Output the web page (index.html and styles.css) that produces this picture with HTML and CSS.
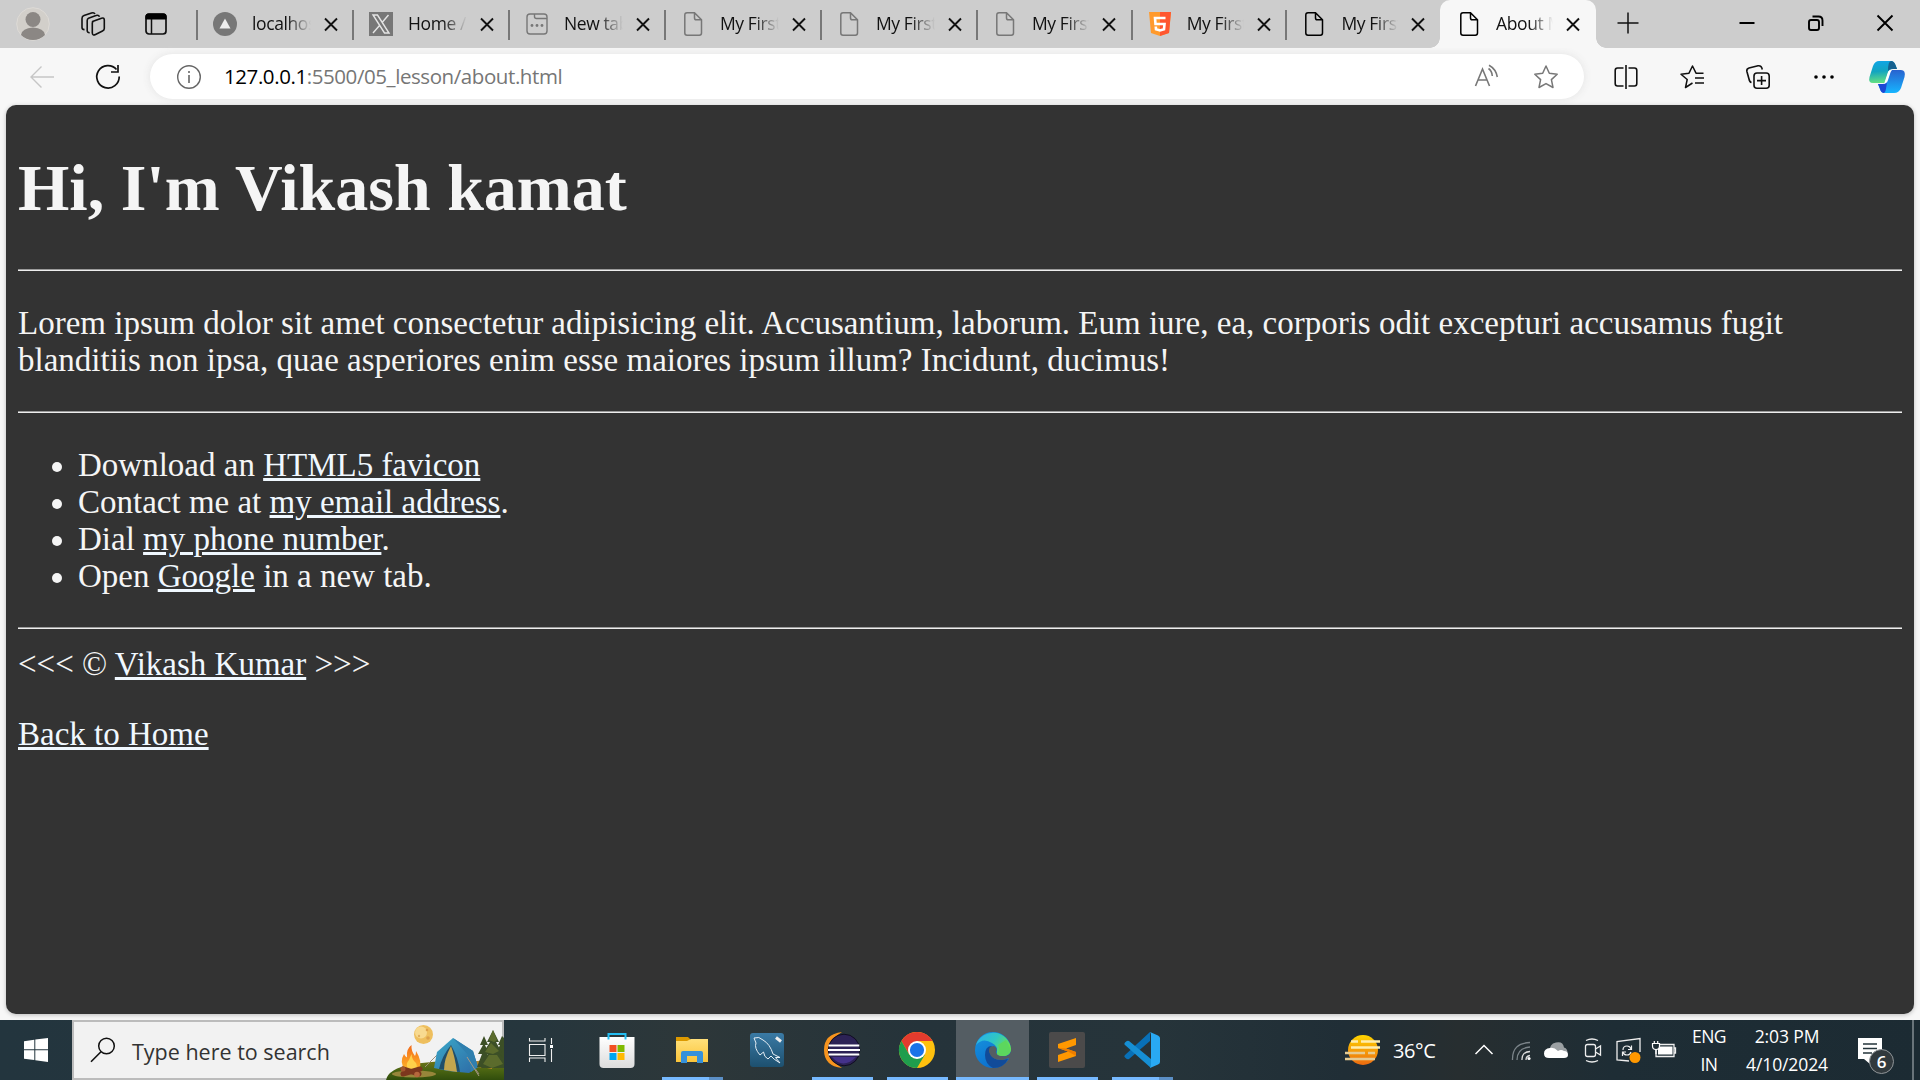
FILE: index.html
```
<!DOCTYPE html>
<html lang="en">
<head>
<meta charset="utf-8">
<title>About Me</title>
<link rel="stylesheet" href="styles.css">
</head>
<body>
<svg class="defs" aria-hidden="true">
  <defs>
    <symbol id="x" viewBox="0 0 24 24"><path d="M6 6.500 18 18.500M18 6.500 6 18.500" fill="none" stroke="#111" stroke-width="1.900"/></symbol>
    <symbol id="doc" viewBox="0 0 24 24"><path d="M6 .8H13.500L20.500 7.800V21Q20.500 23.200 18.300 23.200H6Q3.800 23.200 3.800 21V3Q3.800 .8 6 .8ZM13.500 1V6Q13.500 7.800 15.300 7.800H20.300" fill="none" stroke="currentColor" stroke-width="1.500"/></symbol>
    <linearGradient id="tent" x2="1" y2="1"><stop stop-color="#3ba9c9"/><stop offset="1" stop-color="#2d6aa5"/></linearGradient>
    <linearGradient id="flame" x2="0" y2="1"><stop stop-color="#f26a1b"/><stop offset="1" stop-color="#ffb52a"/></linearGradient>
    <linearGradient id="grass" x2="0" y2="1"><stop stop-color="#6f7418"/><stop offset=".5" stop-color="#4a6412"/><stop offset="1" stop-color="#304d0c"/></linearGradient>
    <linearGradient id="gold" x2="0" y2="1"><stop stop-color="#ffd500"/><stop offset="1" stop-color="#ec6a10"/></linearGradient>
    <linearGradient id="edgeTop" x2="1" y2=".5"><stop stop-color="#2bafee"/><stop offset=".55" stop-color="#2fc6c4"/><stop offset="1" stop-color="#6ce34b"/></linearGradient>
    <linearGradient id="edgeLow" x2=".6" y2="1"><stop stop-color="#1795df"/><stop offset="1" stop-color="#0b6dcc"/></linearGradient>
    <linearGradient id="cpA" x2=".1" y2="1"><stop stop-color="#10a5e8"/><stop offset=".5" stop-color="#13a5c0"/><stop offset="1" stop-color="#63df83"/></linearGradient>
    <linearGradient id="cpB" x2="0" y2="1"><stop stop-color="#2862cf"/><stop offset="1" stop-color="#16b5ff"/></linearGradient>
    <linearGradient id="fold" x2="0" y2="1"><stop stop-color="#ffe07a"/><stop offset="1" stop-color="#fbc43a"/></linearGradient>
    <linearGradient id="sea" x2="0" y2="1"><stop stop-color="#3a7aa5"/><stop offset="1" stop-color="#1d506f"/></linearGradient>
    <linearGradient id="bag" x2="0" y2="1"><stop stop-color="#fff"/><stop offset="1" stop-color="#dcdcdc"/></linearGradient>
  </defs>
</svg>

<header class="tabstrip">
  <div class="lead">
    <svg class="avatar" viewBox="0 0 34 34"><circle cx="17" cy="17" r="16.300" fill="#d2cfca" stroke="#dedbd7"/><circle cx="17" cy="12.500" r="7.500" fill="#8b8784"/><path d="M5 28Q6 21 17 20.500Q28 21 29 28Q24 33 17 33T5 28Z" fill="#8b8784"/></svg>
    <svg class="ic" viewBox="0 0 24 24"><g fill="none" stroke="#111" stroke-width="1.600" stroke-linejoin="round"><path d="M11.500 9.500 20.500 6.200Q23.300 5.400 23.300 8V16.500Q23.300 18.200 21.500 19L14.500 22.500Q11.500 24 11.300 21V11Q11.300 10 12.200 9.500Z"/><path d="M18.500 4.800Q17.600 2.600 15 3.600L7.500 6.200Q6.200 6.800 6.200 8.500V18.500Q6.200 20.800 8.700 20.700"/><path d="M14 2Q13 .1 10.500 1L3 3.600Q1 4.300 1 6.500V15.500Q1 17.600 3.500 17.600"/></g></svg>
    <svg class="ic" viewBox="0 0 24 24"><rect x="2" y="2" width="20" height="20" rx="3" fill="none" stroke="#111" stroke-width="1.700"/><path d="M2 7V4Q2 2 4 2H20Q22 2 22 4V7Z" fill="#000" stroke="#000"/><path d="M7.500 7V22" stroke="#111" stroke-width="1.500"/></svg>
  </div>
  <div class="tab"><svg viewBox="0 0 24 24"><circle cx="12" cy="12" r="12" fill="#777"/><path d="M12 6.500 17.500 16.500H6.500Z" fill="#eee"/></svg><span class="name">localhost</span><svg><use href="#x"/></svg></div>
  <div class="tab"><svg viewBox="0 0 24 24"><path d="M0 0H24V24H0Z" fill="#777"/><path d="M4 3H8.500L20 21H15.500ZM19.500 3 13.500 10M10.500 13.500 4 21" fill="none" stroke="#e5e5e5" stroke-width="1.400"/></svg><span class="name">Home / X</span><svg><use href="#x"/></svg></div>
  <div class="tab"><svg viewBox="0 0 24 24"><g fill="none" stroke="#777" stroke-width="1.400"><rect x="2" y="2" width="20" height="20" rx="3"/><path d="M9.500 2V4.500Q9.500 6.500 11.500 6.500H22"/></g><g fill="#777"><circle cx="7" cy="13.500" r="1.400"/><circle cx="12" cy="13.500" r="1.400"/><circle cx="17" cy="13.500" r="1.400"/></g></svg><span class="name">New tab</span><svg><use href="#x"/></svg></div>
  <div class="tab idle"><svg><use href="#doc"/></svg><span class="name">My First</span><svg><use href="#x"/></svg></div>
  <div class="tab idle"><svg><use href="#doc"/></svg><span class="name">My First</span><svg><use href="#x"/></svg></div>
  <div class="tab idle narrow"><svg><use href="#doc"/></svg><span class="name">My First</span><svg><use href="#x"/></svg></div>
  <div class="tab narrow"><svg viewBox="0 0 24 24"><path d="M1 0H23L21 21 12 24 3 21Z" fill="#ff9a2c"/><path d="M12 0H23L21 21 12 24Z" fill="#ff5630"/><path d="M17.500 6H7L7.500 12H16.500L16 17.200 12 18.500 8 17.200 7.800 14.500" fill="none" stroke="#fff" stroke-width="2.600"/></svg><span class="name">My First</span><svg><use href="#x"/></svg></div>
  <div class="tab narrow"><svg><use href="#doc"/></svg><span class="name">My First</span><svg><use href="#x"/></svg></div>
  <div class="tab narrow active"><svg><use href="#doc"/></svg><span class="name">About Me</span><svg><use href="#x"/></svg></div>
  <svg class="plus" viewBox="0 0 24 24"><path d="M1.500 12H22.500M12 1.500V22.500" stroke="#111" stroke-width="1.500"/></svg>
  <div class="winctl">
    <svg viewBox="0 0 24 24"><path d="M4.500 12H19.500" stroke="#000" stroke-width="2"/></svg>
    <svg viewBox="0 0 24 24"><g fill="none" stroke="#000" stroke-width="1.900"><rect x="5" y="9" width="10" height="10" rx="2"/><path d="M8.500 5.500H14.500Q18.500 5.500 18.500 9.500V15"/></g></svg>
    <svg viewBox="0 0 24 24"><path d="M4.500 4.500 19.500 19.500M19.500 4.500 4.500 19.500" stroke="#000" stroke-width="1.900"/></svg>
  </div>
</header>

<nav class="toolbar">
  <svg class="back" viewBox="0 0 24 24"><path d="M24 12H1M11.500 1.500 1 12 11.500 22.500" fill="none" stroke="#c6c6c6" stroke-width="1.400"/></svg>
  <svg class="reload" viewBox="0 0 24 24"><path d="M20.500 4.500A11.200 11.200 0 1 0 23.200 11.500M22 0V7H15" fill="none" stroke="#111" stroke-width="1.700"/></svg>
  <div class="address">
    <svg viewBox="0 0 24 24"><circle cx="12" cy="12" r="11.300" fill="none" stroke="#666" stroke-width="1.400"/><path d="M12 10V18M12 6V8" stroke="#666" stroke-width="1.600"/></svg>
    <span class="url"><b>127.0.0.1</b>:5500/05_lesson/about.html</span>
    <svg viewBox="0 0 24 24"><path d="M1.500 21 8.500 4 15.500 21M4 15H13M14.500 3.500Q18 6 18.300 11M15 .2Q22 4 23.300 12" fill="none" stroke="#777" stroke-width="1.600"/></svg>
    <svg viewBox="0 0 24 24"><path d="M12 1 15.300 8.300 23.200 9.200 17.400 14.600 19 22.500 12 18.600 5 22.500 6.600 14.600 .8 9.200 8.700 8.300Z" fill="none" stroke="#777" stroke-width="1.500" stroke-linejoin="round"/></svg>
  </div>
  <div class="tools">
    <svg viewBox="0 0 24 24"><path d="M9.500 3H3.500Q1.200 3 1.200 5.500V18.500Q1.200 21 3.500 21H9.500M14.500 3H20.500Q22.800 3 22.800 5.500V18.500Q22.800 21 20.500 21H14.500M12 0V24" fill="none" stroke="#111" stroke-width="1.600"/></svg>
    <svg viewBox="0 0 24 24"><path d="M12.500 18 5.500 22.500 7.200 14.500 1 9.200 9 8.200 12.500 1 16 8.200H23.500M15 13H24M15 18H24" fill="none" stroke="#111" stroke-width="1.500" stroke-linejoin="round"/></svg>
    <svg viewBox="0 0 24 24"><g fill="none" stroke="#111" stroke-width="1.600"><rect x="8" y="8" width="15.200" height="15.200" rx="3"/><path d="M15.600 11V20M11 15.600H20M5.500 17.500Q3.500 17 3 14L.9 6.500Q.3 3.800 3 3L12 .8Q15.500 .3 16.300 4.500"/></g></svg>
    <svg viewBox="0 0 24 24"><circle cx="4" cy="12" r="1.800"/><circle cx="12" cy="12" r="1.800"/><circle cx="20" cy="12" r="1.800"/></svg>
    <svg class="copilot" viewBox="0 0 36 34"><path d="M10 1H22Q25 1 26.500 5L28 9H24Q20 9 19 13L16 23H4Q-1 23 .5 17L4 6Q6 1 10 1Z" fill="url(#cpA)"/><path d="M22 1Q25 1 26.500 5L28 9H24Q20 9 19 11Q19 1 22 1Z" fill="#16618f"/><path d="M9 24H14Q17 24 18 20L21 10H32Q37 10 35.500 17L32 28Q30 33 25 33H16Q12 33 11 29Z" fill="url(#cpB)"/><path d="M9 24H14Q17 24 18 21Q17 33 15 33Q12 33 11 29Z" fill="#1c49d5"/><path d="M19 12Q20 9.500 24 9.500Q22 10 21 14L19 20Q18 24 13.500 24Q15.500 24 16 21Z" fill="#fff"/></svg>
  </div>
</nav>

<main class="page">
  <h1>Hi, I'm Vikash kamat</h1>
  <hr>
  <p>Lorem ipsum dolor sit amet consectetur adipisicing elit. Accusantium, laborum. Eum iure, ea, corporis odit excepturi accusamus fugit blanditiis non ipsa, quae asperiores enim esse maiores ipsum illum? Incidunt, ducimus!</p>
  <hr>
  <ul>
    <li>Download an <a href="#">HTML5 favicon</a></li>
    <li>Contact me at <a href="#">my email address</a>.</li>
    <li>Dial <a href="#">my phone number</a>.</li>
    <li>Open <a href="#">Google</a> in a new tab.</li>
  </ul>
  <hr>
  <footer>&lt;&lt;&lt; &copy; <a href="#">Vikash Kumar</a> &gt;&gt;&gt;</footer>
  <p class="home"><a href="#">Back to Home</a></p>
</main>

<div class="taskbar">
  <div class="start"><svg viewBox="0 0 24 24"><path d="M0 3.200 10.300 1.800V11.300H0ZM11.300 1.600 24 0V11.300H11.300ZM0 12.300H10.300V22L0 20.700ZM11.300 12.300H24V24L11.300 22.200Z" fill="#fff"/></svg></div>
  <div class="search">
    <svg class="lens" viewBox="0 0 26 26"><circle cx="16.500" cy="9" r="7.800" fill="none" stroke="#111" stroke-width="1.500"/><path d="M11 14.700 1 24.800" stroke="#111" stroke-width="1.600"/></svg>
    <span class="hint">Type here to search</span>
    <svg class="scene" viewBox="0 0 118 60">
      <path d="M0 60Q2 49 26 44Q70 38 118 44V60Z" fill="url(#grass)"/>
      <path d="M84 43Q96 38 106 43V49Q96 46 84 48Z" fill="#b3842a"/>
      <ellipse cx="28" cy="54" rx="22" ry="3.500" fill="#97863a"/>
      <circle cx="37.500" cy="14.500" r="9.500" fill="#eebf5e"/><circle cx="35" cy="12.500" r="6" fill="#f8da90"/><circle cx="42" cy="18" r="1.800" fill="#dda04b"/><circle cx="41" cy="10" r="1.300" fill="#dda04b"/><circle cx="33" cy="16" r="1.200" fill="#e3b060"/>
      <path d="M19 50Q13 42 18 34Q20 38 21 37Q20 29 25.500 25Q25 31 29 36Q30 35 30 31Q37 42 33 50Z" fill="url(#flame)"/>
      <path d="M22 49Q19 44 23 40L25.500 34Q26 40 30 43Q32 47 29 50Z" fill="#ffd04a"/>
      <path d="M17 49 33 54M34 49 17 54" stroke="#7c371d" stroke-width="5" stroke-linecap="round"/><circle cx="17" cy="49" r="2.500" fill="#a3572f"/><circle cx="31" cy="54.500" r="2.800" fill="#b5683c"/>
      <path d="M39 47 52 34M81 37 93 54" stroke="#9c8e79"/>
      <path d="M48 48 51 32 67 18 87 31 92 47 83 53 62 51Z" fill="url(#tent)"/>
      <path d="M67 18 82 35 85 52 92 47 87 31Z" fill="#2f7fae"/>
      <path d="M65 25Q56 36 53 49L74 52Q72 37 65 25Z" fill="#214e6a"/>
      <path d="M65 26Q58 39 58 50L71 52Q69 37 65 26Z" fill="#c5a64e"/>
      <path d="M81 37 93 56" stroke="#a89a84"/>
      <g fill="#3c4f26"><path d="M98 16 94 25H97L92 34H96L91 47H106L101 34H103L99 25H102Z"/><path d="M116 16 112 25H114L110 34V47H118V18Z"/><path d="M107 10 101 22H104L97 33H102L95 48H118V38L112 33H116L110 22H113Z"/></g>
      <path d="M107 10 103 20 108 22 111 20ZM105 23 99 32 107 34 113 31ZM103 35 97 44 106 48 117 44 111 35Z" fill="#66742f" opacity=".75"/>
    </svg>
  </div>
  <div class="apps">
    <div class="app view"><svg viewBox="0 0 24 24"><path d="M.5 0V3H16V0M.5 24V20H16V24M.5 6.500H16V17.500H.5ZM22.500 0V24" fill="none" stroke="#eee" stroke-width="1.100"/><path d="M20.500 6.500H24.500V10.500H20.500Z" fill="#fff" stroke="#26363d"/></svg></div>
    <div class="app"><svg viewBox="0 0 36 36"><path d="M.5 5H35.500V32Q35.500 36 31.500 36H4.500Q.5 36 .5 32Z" fill="url(#bag)"/><path d="M9.500 7.500V2H26.500V7.500" fill="none" stroke="#23bdf2" stroke-width="2"/><path d="M10.500 13H17.500V20H10.500Z" fill="#f25022"/><path d="M18.500 13H25.500V20H18.500Z" fill="#7fba00"/><path d="M10.500 21H17.500V28H10.500Z" fill="#00a4ef"/><path d="M18.500 21H25.500V28H18.500Z" fill="#ffb900"/></svg></div>
    <div class="app run multi"><svg viewBox="0 0 36 36"><path d="M2 5H14L18 9H2Z" fill="#dc9900"/><path d="M2 9H13L17 7H34V30H2Z" fill="url(#fold)"/><path d="M7 31V21Q7 19 9 19H27Q29 19 29 21V31H23V24H13V31Z" fill="#3691db"/></svg></div>
    <div class="app"><svg viewBox="0 0 36 36"><rect x="1" y="1" width="34" height="34" rx="3" fill="url(#sea)"/><path d="M11 23Q5 16 7 11L5 6Q10 4 14 8Q21 12 24 22L31 25.500 26.500 25.500 31 31Q24 27 22 24L19 27Q15 25 14.500 20Z" fill="none" stroke="#e5eef5" stroke-width="1"/><path d="M27 5.500 32 9.500" stroke="#eee" stroke-width="3"/></svg></div>
    <div class="app run"><svg viewBox="0 0 36 36"><path d="M18 0Q0 2 0 18T18 36Q6 29 6 18T18 0Z" fill="#f7941e"/><circle cx="20" cy="18" r="15.800" fill="#2c2255" stroke="#100d20"/><path d="M8 25Q19 38 32 25Z" fill="#44328a"/><path d="M4.500 13.500H35.300M4 18H36M4.500 22.500H35.300" stroke="#fff" stroke-width="2"/></svg></div>
    <div class="app run"><svg viewBox="0 0 36 36"><circle cx="18" cy="18" r="18" fill="#ffc10e"/><path d="M2.400 9A18 18 0 0 1 33.600 9H18L10 22Z" fill="#e33b2e"/><path d="M2.400 9A18 18 0 0 0 18 36L26 22.500 18 26 10.200 22.500Z" fill="#1f9d4d"/><circle cx="18" cy="18" r="9" fill="#fff"/><circle cx="18" cy="18" r="7.100" fill="#1a73e8"/></svg></div>
    <div class="app run current"><svg viewBox="0 0 36 36"><circle cx="18" cy="18" r="18" fill="url(#edgeLow)"/><path d="M1 13A18 18 0 0 1 36 17Q36 24 28 24Q20 24 22 20Q23 14 17 11Q8 5 1 13Z" fill="url(#edgeTop)"/><path d="M10 23Q10 14 17 14Q13 18 16 23Q20 30 33 27Q29 36 18 36Q10 32 10 23Z" fill="#114b99"/><path d="M36 19Q35 25 27 24Q22 24 21 20Q23 16 19 14Q13 14 14 20Q17 29 28 28L34 26L36 29Z" fill="#545d63"/><path d="M23 13Q26 18 22 21Q22 24 28 24Q34 24 36 18L31 8Z" fill="#5cd75e"/></svg></div>
    <div class="app run"><svg viewBox="0 0 36 36"><rect width="36" height="36" rx="2" fill="#4b4a4a"/><path d="M9 12 27 6V13L17 16.500 27 20V24L9 30V23L19 19.500 9 16Z" fill="#ff9800"/><path d="M9 16 19 19.500 27 24V20L17 16.500Z" fill="#ed7d00"/></svg></div>
    <div class="app run multi"><svg viewBox="0 0 36 36"><path d="M26 0V9L5 27Q3 28 1 25.500Q-.5 24 1 23Z" fill="#0870b7"/><path d="M5 9 27 27V36L1 13Q-.5 12 1 10.500Q3 8 5 9Z" fill="#168fd4"/><path d="M26 0 34 3.500Q36 4.500 36 6V30Q36 31.500 34 32.500L26 36Q27 35 27 33V3Q27 1 26 0Z" fill="#29a9f3"/></svg></div>
  </div>
  <div class="weather"><svg viewBox="0 0 36 30"><ellipse cx="18" cy="15" rx="15" ry="15" fill="url(#gold)"/><path d="M6 6.500H13M16 6.500H35M6 12.500H35" stroke="#ffedae" stroke-width="2.300"/><path d="M0 18H20M23 18H30M0 24H30" stroke="#e5cb93" stroke-width="2.300"/></svg><span>36°C</span></div>
  <div class="tray">
    <svg viewBox="0 0 24 24"><path d="M3.500 16 12 7.500 20.500 16" fill="none" stroke="#fff" stroke-width="1.500"/></svg>
    <svg viewBox="0 0 24 24"><g fill="none" stroke-width="1.300"><path d="M4.500 22Q4 5 22 4.500M9 22Q9 10 22 9" stroke="#7c858a"/><path d="M14 22Q13.500 14 22 13.500M18 22Q18 18 22 17.500" stroke="#ddd"/></g><circle cx="21" cy="20.500" r="1.600" fill="#fff"/></svg>
    <svg viewBox="0 0 24 24"><path d="M6 13Q5 6 12 4.500T20 9.500Q24 10.500 23.500 16L8 18Z" fill="#9ba0a3"/><path d="M5 20Q0 20 0 15.500Q0 10.500 6 10Q10 9 14 13Q17 11 20 13Q24 13 24 17Q24 20 20 20Z" fill="#fff"/></svg>
    <svg viewBox="0 0 24 24"><g fill="none" stroke="#eee" stroke-width="1.300"><rect x="5.500" y="6.500" width="10" height="12" rx="2"/><path d="M15.500 11 20.500 8V17L15.500 14M6 2.500Q12 -.5 18 2.500M6 22.500Q12 25.500 18 22.500"/></g></svg>
    <svg viewBox="0 0 24 24"><path d="M13 23 1 22V3.500L24 .5V14" fill="none" stroke="#eee" stroke-width="1.300"/><path d="M7 12Q7 8 11 8Q14 8 15 11M15.500 7.500V11.500H12M15 14Q14 17 11 17Q8 17 7 14.500M6.500 18V14H10" fill="none" stroke="#eee" stroke-width="1.200"/><circle cx="19" cy="19.500" r="5.500" fill="#ff9800"/></svg>
    <svg viewBox="0 0 24 24"><path d="M7 6.500H22V18.500H4V11M22 10H23.500V15H22" fill="none" stroke="#eee" stroke-width="1.300"/><path d="M6 8.500H20.500V16.500H6Z" fill="#fff"/><path d="M.5 5.500H7.500V8Q7.500 11.500 4 11.500T.5 8Z" fill="#1e2d35" stroke="#fff" stroke-width="1.200"/><path d="M2.300 3V5.500M5.700 3V5.500M4 11.500V16" stroke="#fff" stroke-width="1.200"/></svg>
  </div>
  <div class="lang"><span>ENG</span><span>IN</span></div>
  <div class="clock"><span>2:03 PM</span><span>4/10/2024</span></div>
  <div class="notes"><svg viewBox="0 0 24 26"><path d="M0 0H24V21H12V26L6 21H0Z" fill="#fff"/><path d="M5 6H19M5 10.500H19M5 15H14" stroke="#24343b" stroke-width="1.300"/></svg><span class="badge">6</span></div>
  <div class="peek"></div>
</div>
</body>
</html>
```
FILE: styles.css
```
* { box-sizing: border-box; }
body {
  margin: 0;
  width: 1920px;
  height: 1080px;
  overflow: hidden;
  display: flex;
  flex-direction: column;
  background: #f7f7f7;
  font-family: "Open Sans", "Noto Sans", sans-serif;
}
svg { width: 24px; height: 24px; flex: none; display: block; overflow: visible; }
.defs { position: absolute; width: 0; height: 0; }

/* tab strip */
.tabstrip { height: 48px; flex: none; display: flex; align-items: center; background: #cdcdcd; }
.lead { width: 196px; padding-left: 16px; display: flex; align-items: center; }
.lead .avatar { width: 34px; height: 34px; margin-right: 31px; }
.lead .ic + .ic { margin-left: 39px; }
.tab { width: 156px; height: 48px; padding-left: 15px; display: flex; align-items: center; position: relative; }
.tab::before { content: ""; width: 2px; height: 30px; margin: 2px 0 0 -15px; background: #777; }
.tab > svg:first-child { margin-left: 15px; }
.tab.narrow { width: 154.700px; }
.name {
  width: 59px;
  margin: 0 8px 2px 15px;
  overflow: hidden;
  white-space: nowrap;
  font-size: 17.500px;
  letter-spacing: -.4px;
  color: #111;
  -webkit-mask-image: linear-gradient(90deg, #000 58%, transparent);
  mask-image: linear-gradient(90deg, #000 58%, transparent);
}
.narrow .name { width: 57px; }
.idle { color: #777; }
.tab.active { width: 156px; background: #f7f7f7; border-radius: 10px 10px 0 0; }
.tab.active::before { background: none; }
.active::after {
  content: "";
  position: absolute;
  left: -10px;
  right: -10px;
  bottom: 0;
  height: 10px;
  background:
    radial-gradient(circle at 0 0, transparent 9.500px, #f7f7f7 10px) left / 10px 10px no-repeat,
    radial-gradient(circle at 100% 0, transparent 9.500px, #f7f7f7 10px) right / 10px 10px no-repeat;
}
.plus { margin: 0 0 2px 20px; }
.winctl { margin: 0 23px 2px auto; display: flex; gap: 45px; }

/* toolbar */
.toolbar { height: 57px; flex: none; padding: 0 15px 0 30px; display: flex; align-items: center; }
.reload { margin-left: 42px; }
.address {
  width: 1434px;
  height: 45px;
  margin-left: 30px;
  padding: 0 26px 0 27px;
  display: flex;
  align-items: center;
  border-radius: 23px;
  background: #fff;
  box-shadow: 0 0 8px #e3e3e3;
}
.url { margin: 0 auto 1px 23px; font-size: 20.500px; letter-spacing: -.42px; color: #767676; }
.url b { font-weight: 400; color: #000; }
.address svg:last-child { margin-left: 36px; }
.tools { margin-left: auto; display: flex; align-items: center; gap: 42px; }
.tools .copilot { width: 36px; height: 34px; margin-left: -9px; }

/* document */
.page {
  height: 909px;
  flex: none;
  margin: 0 6px 6px;
  padding: 45px 12px 0;
  overflow: hidden;
  border-radius: 10px;
  background: #333;
  color: whitesmoke;
  font: 33px/37px "Liberation Serif", "Times New Roman", serif;
  box-shadow: 0 1px 4px #bbb;
}
.page h1 { margin: 0 0 43px; font-size: 66px; line-height: 76px; }
.page hr { height: 2px; margin: 16.500px 0; border: 0; background: linear-gradient(#9a9a9a 50%, #eee 50%); }
.page p, .page ul { margin: 33.500px 0 32.500px; }
.page .home { margin-top: 33px; }
.page footer { margin-top: 17px; }
.page ul { padding-left: 60px; }
.page a { color: aliceblue; text-decoration-thickness: 3px; }

/* taskbar */
.taskbar {
  height: 60px;
  flex: none;
  display: flex;
  align-items: stretch;
  color: #fff;
  background: linear-gradient(90deg, #23353e 0, #26363d 28%, #2d3739 36%, #25333a 48%, #26343a 60%, #202e36 70%, #272e30 76%, #1e2d35 84%, #1c2b33 100%);
}
.start { width: 72px; display: grid; place-items: center; }
.search { width: 432px; padding-left: 16px; display: flex; align-items: center; background: #f2f2f2; border: 2px solid #bcbcbc; color: #333; }
.lens { width: 26px; height: 26px; }
.hint { margin: 3px auto 0 16px; font-size: 21.500px; }
.scene { width: 118px; height: 60px; margin-right: -2px; }
.apps { display: flex; padding-left: 1px; }
.app { width: 75px; display: grid; place-items: center; position: relative; }
.app svg { width: 36px; height: 36px; }
.app.view { width: 74px; }
.app.view svg { width: 24px; height: 24px; margin-right: 3px; }
.run::after { content: ""; position: absolute; left: 7px; right: 7px; bottom: 0; height: 3px; background: #76b9ff; }
.multi::after { background: linear-gradient(90deg, #76b9ff 47px, #5b8fc6 47px); }
.run:not(.current)::after { left: 8px; right: 6px; }
.current { background: #545d63; background-clip: content-box; padding: 0 0 0 2px; }
.current::after { left: 2px; right: 0; }
.weather { margin-left: 166px; display: flex; align-items: center; gap: 12px; font-size: 20px; letter-spacing: -.4px; }
.weather svg { width: 36px; height: 30px; }
.weather span { width: 46px; padding-top: 1px; }
.tray { margin-left: 33px; display: flex; align-items: center; gap: 12px; }
.lang, .clock { display: flex; flex-direction: column; align-items: center; font-size: 17.500px; line-height: 28px; padding-top: 2px; }
.lang { width: 66px; letter-spacing: -.6px; }
.clock { width: 92px; margin-left: -1px; letter-spacing: -.1px; }
.notes { width: 48px; margin-left: 25px; padding-top: 18px; position: relative; }
.notes svg { height: 26px; }
.badge {
  position: absolute;
  left: 11px;
  top: 29px;
  width: 25px;
  height: 25px;
  border: 1px solid #909598;
  border-radius: 50%;
  background: #31393d;
  text-align: center;
  font: 600 17px/23px "Open Sans", sans-serif;
}
.peek { margin-left: auto; width: 8px; border-left: 2px solid #69747a; }
```
